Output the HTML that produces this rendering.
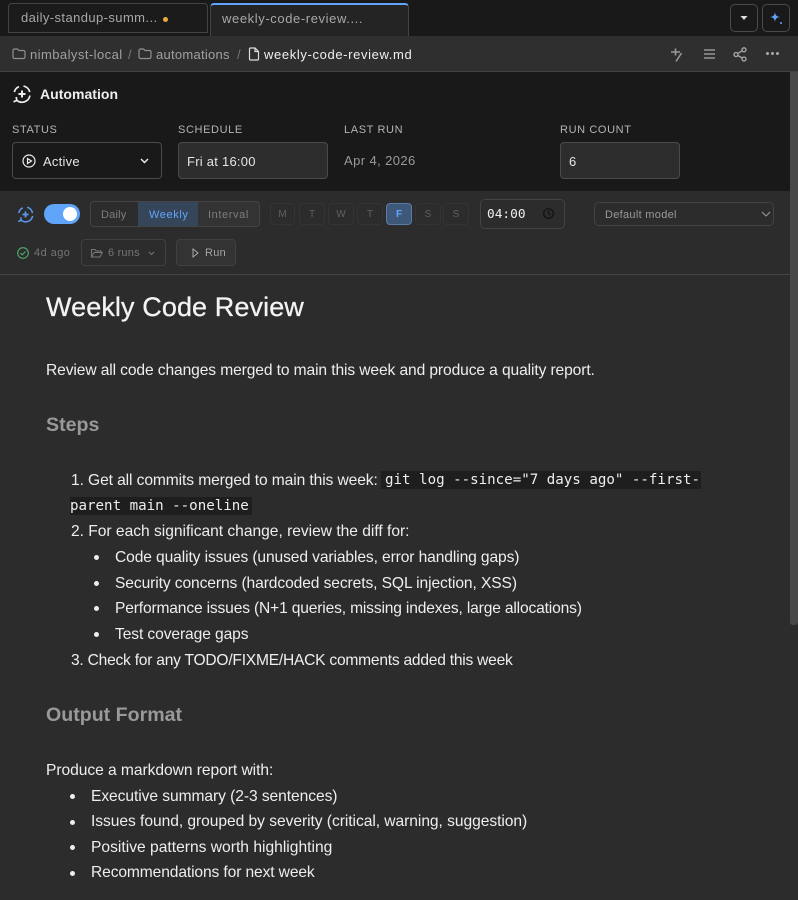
<!DOCTYPE html>
<html><head><meta charset="utf-8">
<style>
*{box-sizing:border-box}
html,body{margin:0;padding:0;width:798px;height:900px;overflow:hidden;background:#2c2c2c}
body{position:relative;font-family:"Liberation Sans",sans-serif;color:#e5e5e5}
.a{position:absolute;white-space:nowrap}
svg{position:absolute;fill:none;overflow:visible}
.t{font-size:15.6px;color:#eee;line-height:26px}
.lbl{font-size:11px;letter-spacing:.62px;color:#b3b3b3;top:124px;line-height:13px}
.day{position:absolute;top:203px;width:26px;height:22px;border:1px solid #343434;border-radius:4px;font-size:10px;color:#606060;text-align:center;line-height:21px}
.code{font-family:"DejaVu Sans Mono","Liberation Mono",monospace;font-size:14.15px;background:#1e1e1e;color:#eee;line-height:18px;height:18px;padding:0 4px}
.dot{position:absolute;width:5px;height:5px;border-radius:50%;background:#eee}
</style></head><body>
<div class="a" style="left:0;top:0;width:798px;height:36px;background:#191919"></div>
<div class="a" style="left:8px;top:3px;width:200px;height:30px;border:1px solid #444;border-radius:4px 4px 0 0;background:#1b1b1b"></div>
<div class="a" style="left:21px;top:10px;font-size:13px;line-height:16px;color:#a8a8a8;letter-spacing:.41px">daily-standup-summ...</div>
<div class="a" style="left:163px;top:17px;width:5px;height:5px;border-radius:50%;background:#e8ac3c"></div>
<div class="a" style="left:210px;top:3px;width:199px;height:33px;background:#242424;border:1px solid #444;border-bottom:0;border-top:2px solid #60a5fa;border-radius:4px 4px 0 0"></div>
<div class="a" style="left:222px;top:11px;font-size:13px;line-height:16px;color:#a8a8a8;letter-spacing:.6px">weekly-code-review....</div>
<div class="a" style="left:730px;top:4px;width:28px;height:28px;border:1px solid #4a4a4a;border-radius:5px"></div>
<svg style="left:739px;top:15px" width="10" height="6"><path d="M1.500 1h7L5 5z" fill="#ddd"/></svg>
<div class="a" style="left:762px;top:4px;width:28px;height:28px;border:1px solid #4a4a4a;border-radius:5px"></div>
<svg style="left:769px;top:11px" width="14" height="14"><path d="M6 1c.5 3.500 1.500 4.500 5 5-3.500.5-4.500 1.500-5 5-.5-3.500-1.500-4.500-5-5 3.500-.5 4.500-1.500 5-5z" fill="#60a5fa"/><circle cx="12" cy="12" r="1" fill="#60a5fa"/></svg>

<div class="a" style="left:0;top:36px;width:798px;height:36px;background:#2f2f2f;border-bottom:1px solid #444"></div>
<svg style="left:12px;top:47px" width="14" height="13" stroke="#8f8f8f" stroke-width="1.200"><path d="M1 3.500a1.500 1.500 0 0 1 1.500-1.500h3l1.500 1.500h4.500a1.500 1.500 0 0 1 1.500 1.500v5a1.500 1.500 0 0 1-1.500 1.500h-9a1.500 1.500 0 0 1-1.500-1.500z"/></svg>
<div class="a" style="left:30px;top:47px;font-size:13px;line-height:16px;color:#a0a0a0;letter-spacing:.44px">nimbalyst-local</div>
<div class="a" style="left:128px;top:47px;font-size:13px;line-height:16px;color:#777">/</div>
<svg style="left:138px;top:47px" width="14" height="13" stroke="#8f8f8f" stroke-width="1.200"><path d="M1 3.500a1.500 1.500 0 0 1 1.500-1.500h3l1.500 1.500h4.500a1.500 1.500 0 0 1 1.500 1.500v5a1.500 1.500 0 0 1-1.500 1.500h-9a1.500 1.500 0 0 1-1.500-1.500z"/></svg>
<div class="a" style="left:156px;top:47px;font-size:13px;line-height:16px;color:#a0a0a0;letter-spacing:.27px">automations</div>
<div class="a" style="left:237px;top:47px;font-size:13px;line-height:16px;color:#777">/</div>
<svg style="left:248px;top:47px" width="12" height="14" stroke="#ddd" stroke-width="1.200"><path d="M1.500 2a1 1 0 0 1 1-1h4.500l3.500 3.500v7.500a1 1 0 0 1-1 1h-7a1 1 0 0 1-1-1zM7 1v3.500h3.500"/></svg>
<div class="a" style="left:264px;top:47px;font-size:13px;line-height:16px;color:#f0f0f0;letter-spacing:.63px">weekly-code-review.md</div>
<svg style="left:670px;top:47px" width="14" height="15" stroke="#999" stroke-width="1.600"><path d="M1 5h9M5.500 1.500v7M11.500 6L6 14.500"/></svg>
<svg style="left:704px;top:49px" width="11" height="10" stroke="#aaa" stroke-width="1.300"><path d="M0 1h11M0 5h11M0 9h11"/></svg>
<svg style="left:733px;top:47px" width="15" height="15" stroke="#aaa" stroke-width="1.300"><circle cx="11" cy="2.800" r="2"/><circle cx="3" cy="7.500" r="2"/><circle cx="11" cy="12" r="2"/><path d="M4.800 6.500l4.500-2.800M4.800 8.500l4.500 2.600"/></svg>
<div class="a" style="left:766px;top:52px;width:3px;height:3px;border-radius:50%;background:#aaa;box-shadow:5px 0 #aaa,10px 0 #aaa"></div>

<div class="a" style="left:0;top:72px;width:790px;height:119px;background:#191919"></div>
<svg style="left:12px;top:84px" width="20" height="20" stroke="#eee" stroke-width="1.700"><path d="M2.300 8a8 8 0 0 1 4.700-5.400M11.500 2.100A8 8 0 0 1 17.800 8M17.900 11.500A8 8 0 0 1 4.500 16M1.500 17.800l3.300-1.300-.6-3.500"/><path d="M10 6.500v7M6.500 10h7" stroke-width="2"/></svg>
<div class="a" style="left:40px;top:85px;font-size:14px;line-height:18px;font-weight:bold;color:#eee;letter-spacing:.03px">Automation</div>
<div class="a lbl" style="left:12px">STATUS</div>
<div class="a lbl" style="left:178px">SCHEDULE</div>
<div class="a lbl" style="left:344px">LAST RUN</div>
<div class="a lbl" style="left:560px">RUN COUNT</div>
<div class="a" style="left:12px;top:142px;width:150px;height:37px;border:1px solid #4a4a4a;border-radius:4px"></div>
<svg style="left:22px;top:154px" width="14" height="14" stroke="#eee" stroke-width="1.200"><circle cx="7" cy="7" r="6"/><path d="M5.500 4.500l4 2.500-4 2.500z"/></svg>
<div class="a" style="left:43px;top:154px;font-size:13px;line-height:16px;color:#e5e5e5;letter-spacing:.25px">Active</div>
<svg style="left:140px;top:158px" width="9" height="6" stroke="#eee" stroke-width="1.400"><path d="M1 1l3.500 3.500L8 1"/></svg>
<div class="a" style="left:178px;top:142px;width:150px;height:37px;background:#2d2d2d;border:1px solid #4a4a4a;border-radius:4px"></div>
<div class="a" style="left:187px;top:154px;font-size:13px;line-height:16px;color:#e5e5e5;letter-spacing:.25px">Fri at 16:00</div>
<div class="a" style="left:344px;top:153px;font-size:13px;line-height:16px;color:#999;letter-spacing:.4px">Apr 4, 2026</div>
<div class="a" style="left:560px;top:142px;width:120px;height:37px;background:#2d2d2d;border:1px solid #4a4a4a;border-radius:4px"></div>
<div class="a" style="left:569px;top:154px;font-size:13px;line-height:16px;color:#e5e5e5">6</div>

<div class="a" style="left:0;top:191px;width:790px;height:84px;background:#2c2c2c;border-bottom:1px solid #444"></div>
<svg style="left:17px;top:206px" width="17" height="17" stroke="#5b9bf0" stroke-width="1.500"><path d="M1.800 7a7 7 0 0 1 4-5.200M10 1.300A7 7 0 0 1 15.500 7M15.600 10A7 7 0 0 1 4 14M1.300 15.500l2.900-1.200-.5-3"/><path d="M8.500 5.500v6M5.500 8.500h6" stroke-width="1.700"/></svg>
<div class="a" style="left:44px;top:204px;width:36px;height:20px;border-radius:10px;background:#60a5fa"></div>
<div class="a" style="left:63px;top:207px;width:14px;height:14px;border-radius:50%;background:#fff"></div>

<div class="a" style="left:90px;top:201px;width:170px;height:26px;border:1px solid #444;border-radius:4px"></div>
<div class="a" style="left:138px;top:202px;width:60px;height:24px;background:#36465a"></div>
<div class="a" style="left:198px;top:202px;width:61px;height:24px;background:#333;border-radius:0 3px 3px 0"></div>
<div class="a" style="left:101px;top:208px;font-size:11px;line-height:14px;color:#7e7e7e;letter-spacing:.2px">Daily</div>
<div class="a" style="left:149px;top:208px;font-size:11px;line-height:14px;color:#60a5fa;letter-spacing:.6px">Weekly</div>
<div class="a" style="left:208px;top:208px;font-size:11px;line-height:14px;color:#7e7e7e;letter-spacing:.6px">Interval</div>

<div class="day" style="left:270px;width:25px">M</div>
<div class="day" style="left:299px">T</div>
<div class="day" style="left:328px">W</div>
<div class="day" style="left:357px">T</div>
<div class="day" style="left:386px;background:#3d5879;border-color:#5a7ba5;color:#60a5fa;font-weight:bold">F</div>
<div class="day" style="left:415px">S</div>
<div class="day" style="left:443px">S</div>

<div class="a" style="left:480px;top:199px;width:85px;height:30px;border:1px solid #444;border-radius:5px"></div>
<div class="a" style="left:487px;top:207px;font-family:'DejaVu Sans Mono',monospace;font-size:12.8px;line-height:16px;color:#eee">04:00</div>
<svg style="left:543px;top:208px" width="11" height="11" stroke="#111" stroke-width="1.200"><circle cx="5.500" cy="5.500" r="4.800"/><path d="M5.500 2.500v3l2 1.500"/></svg>

<div class="a" style="left:594px;top:202px;width:180px;height:24px;border:1px solid #444;border-radius:5px"></div>
<div class="a" style="left:605px;top:208px;font-size:11px;line-height:14px;color:#999;letter-spacing:.3px">Default model</div>
<svg style="left:761px;top:211px" width="10" height="6" stroke="#999" stroke-width="1.100"><path d="M1 1l4 4 4-4"/></svg>

<svg style="left:17px;top:247px" width="12" height="12" stroke="#4caf6d" stroke-width="1.100"><circle cx="6" cy="6" r="5.300"/><path d="M3.500 6l1.800 1.800L8.500 4.500"/></svg>
<div class="a" style="left:34px;top:246px;font-size:11px;line-height:14px;color:#757575;letter-spacing:.45px">4d ago</div>
<div class="a" style="left:81px;top:239px;width:85px;height:27px;border:1px solid #404040;border-radius:4px"></div>
<svg style="left:91px;top:248px" width="12" height="10" stroke="#777" stroke-width="1"><path d="M.5 8.500V1.500h3.500l1 1.500h5v1.500M.5 9h8.500l2.300-4.500H3L.5 9z"/></svg>
<div class="a" style="left:108px;top:246px;font-size:11px;line-height:14px;color:#757575;letter-spacing:.2px">6 runs</div>
<svg style="left:148px;top:251px" width="7" height="5" stroke="#777" stroke-width="1"><path d="M.8.800l2.700 2.700L6.200.800"/></svg>
<div class="a" style="left:176px;top:239px;width:60px;height:27px;background:#333;border:1px solid #404040;border-radius:4px"></div>
<svg style="left:192px;top:248px" width="7" height="10" stroke="#aaa" stroke-width="1"><path d="M1 1l5 4-5 4z"/></svg>
<div class="a" style="left:205px;top:246px;font-size:11px;line-height:14px;color:#a5a5a5;letter-spacing:.3px">Run</div>

<div class="a" style="left:790px;top:72px;width:8px;height:553px;background:#484848;border-radius:0 0 3px 3px"></div>

<div class="a" style="left:46px;top:290px;font-size:27px;line-height:34px;color:#f3f3f3;letter-spacing:.1px;-webkit-text-stroke:.3px #f3f3f3">Weekly Code Review</div>
<div class="a t" style="left:46px;top:358px;letter-spacing:-.11px">Review all code changes merged to main this week and produce a quality report.</div>
<div class="a" style="left:46px;top:413px;font-size:19.6px;line-height:24px;font-weight:bold;color:#999">Steps</div>
<div class="a t" style="left:71px;top:468px;letter-spacing:-.1px">1. Get all commits merged to main this week:</div>
<div class="a code" style="left:381px;top:471px;width:320px">git log --since="7 days ago" --first-</div>
<div class="a code" style="left:70px;top:497px;width:182px;padding-left:0">parent main --oneline</div>
<div class="a t" style="left:71px;top:519px;letter-spacing:-.02px">2. For each significant change, review the diff for:</div>
<div class="dot" style="left:94px;top:555px"></div>
<div class="a t" style="left:115px;top:545px;letter-spacing:-.11px">Code quality issues (unused variables, error handling gaps)</div>
<div class="dot" style="left:94px;top:581px"></div>
<div class="a t" style="left:115px;top:571px;letter-spacing:-.1px">Security concerns (hardcoded secrets, SQL injection, XSS)</div>
<div class="dot" style="left:94px;top:606px"></div>
<div class="a t" style="left:115px;top:596px;letter-spacing:-.165px">Performance issues (N+1 queries, missing indexes, large allocations)</div>
<div class="dot" style="left:94px;top:632px"></div>
<div class="a t" style="left:115px;top:622px;letter-spacing:-.1px">Test coverage gaps</div>
<div class="a t" style="left:71px;top:648px;letter-spacing:-.24px">3. Check for any TODO/FIXME/HACK comments added this week</div>
<div class="a" style="left:46px;top:703px;font-size:19.6px;line-height:24px;font-weight:bold;color:#999">Output Format</div>
<div class="a t" style="left:46px;top:758px;letter-spacing:-.05px">Produce a markdown report with:</div>
<div class="dot" style="left:70px;top:794px"></div>
<div class="a t" style="left:91px;top:784px;letter-spacing:-.07px">Executive summary (2-3 sentences)</div>
<div class="dot" style="left:70px;top:820px"></div>
<div class="a t" style="left:91px;top:809px;letter-spacing:-.05px">Issues found, grouped by severity (critical, warning, suggestion)</div>
<div class="dot" style="left:70px;top:845px"></div>
<div class="a t" style="left:91px;top:835px;letter-spacing:.01px">Positive patterns worth highlighting</div>
<div class="dot" style="left:70px;top:871px"></div>
<div class="a t" style="left:91px;top:860px;letter-spacing:-.12px">Recommendations for next week</div>
</body></html>
